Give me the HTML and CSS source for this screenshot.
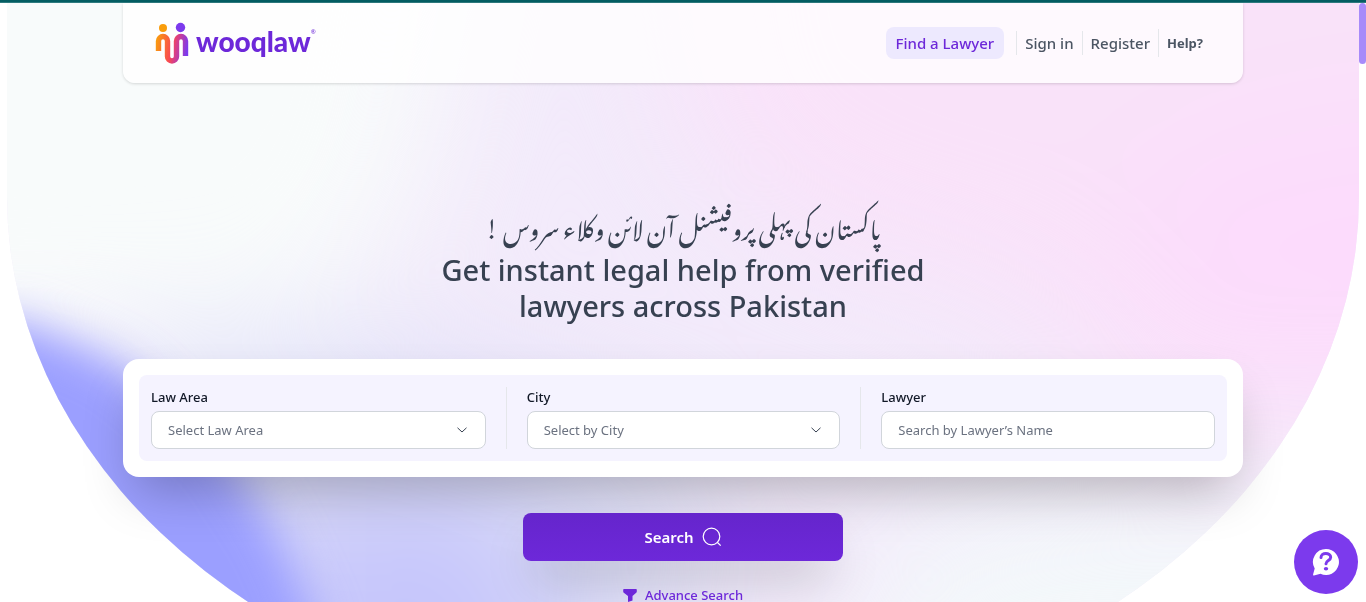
FILE: index.html
```html
<!DOCTYPE html>
<html lang="en">
<head>
<meta charset="utf-8">
<meta name="viewport" content="width=device-width, initial-scale=1">
<title>Wooqlaw</title>
<link rel="stylesheet" href="styles.css">
</head>
<body>
<div class="top-strip"></div>
<div class="scroll-thumb"></div>
<div class="hero">
  <div class="hero-bg">
    <svg class="hero-art" viewBox="0 0 1352 723" preserveAspectRatio="none" aria-hidden="true">
      <defs>
        <filter id="soft" x="-60%" y="-60%" width="220%" height="220%" color-interpolation-filters="sRGB"><feGaussianBlur stdDeviation="65"/></filter>
        <filter id="edge" x="-60%" y="-60%" width="220%" height="220%" color-interpolation-filters="sRGB"><feGaussianBlur stdDeviation="22"/></filter>
      </defs>
      <rect width="1352" height="723" fill="#f3ebfb"/>
      <g filter="url(#soft)">
        <path d="M-300-300H500L420 180 330 320-300 380Z" fill="#f8fbfb"/>
        <path d="M640-200H1600V450H1150L1000 300 800 240 680 140Z" fill="#f9e2f9"/>
        <path d="M1600 90L1260 130 1100 200 1180 340 1600 430Z" fill="#fcdbfc"/>
        <path d="M100 350L380 340 540 390 700 440 660 900H200Z" fill="#dfe0f8"/>
        <path d="M1600 540L1100 490 900 520 740 900H1600Z" fill="#f3f8fa"/>
        <path d="M260 500L500 480 600 800H260Z" fill="#c5c5fb"/>
      </g>
      <path d="M-120 305L20 320 110 360 215 445 270 530 310 620 335 800H-120Z" fill="#9b9fff" filter="url(#edge)"/>
    </svg>
  </div>
  <div class="container">
    <header class="site-header">
      <a class="logo" href="#" aria-label="wooqlaw home">
        <svg class="logo-mark" viewBox="0 0 34 42" aria-hidden="true">
          <defs>
            <linearGradient id="mark" gradientUnits="userSpaceOnUse" x1="1" y1="18" x2="33" y2="24">
              <stop offset="0" stop-color="#f99d0c"/><stop offset=".5" stop-color="#f94a50"/><stop offset=".65" stop-color="#d93f86"/><stop offset="1" stop-color="#7c3aed"/>
            </linearGradient>
          </defs>
          <circle cx="8" cy="6" r="4" fill="#f99d0c"/>
          <circle cx="25.500" cy="5.500" r="4.700" fill="#7c3aed"/>
          <path d="M3.500 29V19a4.500 4.500 0 0 1 9 0V34.500a4.500 4.500 0 0 0 9 0V19a4.500 4.500 0 0 1 9 0V34" fill="none" stroke="url(#mark)" stroke-width="5.400"/>
        </svg>
        <span class="logo-word">wooqlaw</span><sup class="logo-reg">®</sup>
      </a>
      <nav class="nav">
        <a class="nav-cta" href="#">Find a Lawyer</a>
        <a class="nav-link" href="#">Sign in</a>
        <a class="nav-link" href="#">Register</a>
        <a class="nav-link nav-help" href="#">Help?</a>
      </nav>
    </header>
    <main class="main">
      <h2 class="urdu" lang="ur" dir="rtl">پاکستان کی پہلی پروفیشنل آن لائن وکلاء سروس !</h2>
      <h1 class="title">Get instant legal help from verified lawyers across Pakistan</h1>
      <form class="search">
        <div class="search-card">
          <div class="fields">
            <div class="field">
              <label for="area">Law Area</label>
              <div class="control">
                <select id="area"><option>Select Law Area</option></select>
                <svg class="chevron" viewBox="0 0 10 6" aria-hidden="true"><path d="M.5.8L5 5 9.500.8" fill="none" stroke="#374151"/></svg>
              </div>
            </div>
            <div class="field">
              <label for="city">City</label>
              <div class="control">
                <select id="city"><option>Select by City</option></select>
                <svg class="chevron" viewBox="0 0 10 6" aria-hidden="true"><path d="M.5.8L5 5 9.500.8" fill="none" stroke="#374151"/></svg>
              </div>
            </div>
            <div class="field">
              <label for="lawyer">Lawyer</label>
              <div class="control"><input id="lawyer" type="text" placeholder="Search by Lawyer’s Name"></div>
            </div>
          </div>
        </div>
        <button class="submit" type="submit">Search
          <svg class="submit-icon" viewBox="0 0 20 20" fill="none" stroke="currentColor" stroke-width="1.200" aria-hidden="true"><circle cx="9.500" cy="9.500" r="8.300"/><path d="M15.500 15.500L18.700 18.700"/></svg>
        </button>
        <a class="advance" href="#">
          <svg class="funnel" viewBox="0 0 14 14" fill="currentColor" aria-hidden="true"><path d="M1 1H13a.8.8 0 0 1 .8.800V3.500a1.500 1.500 0 0 1-.6 1.200L9.500 8V12.500L5 14V8L.8 4.700A1.500 1.500 0 0 1 .2 3.500V1.800A.8.8 0 0 1 1 1Z"/></svg>
          Advance Search
        </a>
      </form>
    </main>
  </div>
</div>
<button class="help-fab" aria-label="Help">
  <svg class="help-icon" viewBox="0 0 28 28" aria-hidden="true">
    <path d="M14 1a13 13 0 1 1-5.500 24.800L2 27.500Q.8 27.500 1.200 26L2.700 20.500A13 13 0 0 1 14 1Z" fill="#fff"/>
    <path d="M9 9.500C9 3.800 18.700 4.300 18.700 9.300C18.700 12.600 14 12.500 14 15.800" fill="none" stroke="#7c3aed" stroke-width="3" stroke-linecap="round"/>
    <ellipse cx="14" cy="20.700" rx="2.200" ry="1.800" fill="#7c3aed"/>
  </svg>
</button>
</body>
</html>
```
FILE: styles.css
```css
* { box-sizing: border-box; }
body {
  margin: 0;
  height: 100vh;
  overflow: hidden;
  background: #fff;
  color: #374151;
  font-family: "Segoe UI", "Noto Sans", "Open Sans", sans-serif;
}
a { text-decoration: none; color: inherit; }
.top-strip { height: 3px; background: #045d62; border-bottom: 1px solid #2e7b7f; }
.scroll-thumb {
  position: fixed;
  top: 3px;
  right: 0;
  width: 7px;
  height: 61px;
  border-radius: 4px;
  background: #a78bfa;
}
.hero { position: relative; padding: 0 7px; }
.hero-bg {
  position: absolute;
  inset: 0 7px auto;
  height: 723px;
  overflow: hidden;
  border-radius: 0 0 50% 50% / 0 0 529px 529px;
}
.hero-art { display: block; width: 100%; height: 100%; }
.container { position: relative; max-width: 1120px; margin: 0 auto; }
.site-header {
  display: flex;
  align-items: center;
  justify-content: space-between;
  height: 80px;
  padding: 0 32px;
  border-radius: 0 0 12px 12px;
  background: rgba(255, 255, 255, .8);
  box-shadow: 0 1px 3px rgba(0, 0, 0, .15);
}
.logo { display: flex; align-items: center; }
.logo-mark { width: 34px; height: 42px; }
.logo-word {
  margin: 0 0 4px 7px;
  font: 900 28px/36px Lato, sans-serif;
  color: #6d28d9;
}
.logo-reg { align-self: flex-start; font-size: 6px; line-height: 20px; color: #6d28d9; }
.nav { display: flex; align-items: center; font-size: 15px; line-height: 24px; font-weight: 500; color: #4b5563; }
.nav-cta {
  margin-right: 12px;
  padding: 4px 10px;
  border-radius: 8px;
  background: #ede9fe;
  color: #6d28d9;
}
.nav-link { padding: 0 8px; border-left: 1px solid #e5e7eb; }
.nav-help { font-size: 13px; line-height: 28px; font-weight: 700; }
.main { padding-top: 113px; text-align: center; }
.urdu { margin: 0; font: 400 24px/56px "Noto Nastaliq Urdu", "DejaVu Sans", sans-serif; white-space: nowrap; }
.title { max-width: 512px; margin: 0 auto 35px; font-size: 29px; line-height: 36px; font-weight: 500; }
.search { display: flex; flex-direction: column; align-items: center; }
.search-card {
  align-self: stretch;
  padding: 16px;
  border-radius: 16px;
  background: #fff;
  box-shadow: 0 25px 50px -12px rgba(0, 0, 0, .25);
}
.fields {
  display: grid;
  grid-template-columns: repeat(3, 1fr);
  padding: 12px;
  border-radius: 8px;
  background: #f5f3ff;
  text-align: left;
}
.field { padding: 0 20px; border-left: 1px solid #e5e7eb; }
.field:first-child { padding-left: 0; border-left: 0; }
.field:last-child { padding-right: 0; }
.field label { display: block; margin-bottom: 4px; font-size: 13px; line-height: 20px; font-weight: 500; color: #111827; }
.control { position: relative; }
.control select, .control input {
  display: block;
  width: 100%;
  height: 38px;
  padding: 0 16px;
  appearance: none;
  border: 1px solid #d1d5db;
  border-radius: 8px;
  background: #fff;
  color: #6b7280;
  font: 400 13px/20px "Segoe UI", "Noto Sans", "Open Sans", sans-serif;
}
.control input::placeholder { color: #6b7280; }
.chevron { position: absolute; right: 19px; top: 16px; width: 10px; height: 6px; pointer-events: none; }
.submit {
  display: flex;
  align-items: center;
  justify-content: center;
  gap: 8px;
  width: 320px;
  height: 48px;
  margin-top: 36px;
  border: 0;
  border-radius: 8px;
  background: linear-gradient(#6525cc, #6d28d9);
  box-shadow: 0 25px 50px -12px rgba(0, 0, 0, .25);
  color: #fff;
  font: 600 15px/24px "Segoe UI", "Noto Sans", "Open Sans", sans-serif;
}
.submit-icon { width: 20px; height: 20px; }
.advance {
  display: flex;
  align-items: center;
  gap: 8px;
  margin-top: 24px;
  font-size: 13px;
  line-height: 20px;
  font-weight: 500;
  color: #6d28d9;
}
.funnel { width: 14px; height: 14px; }
.help-fab {
  position: fixed;
  right: 8px;
  bottom: 8px;
  display: grid;
  place-items: center;
  width: 64px;
  height: 64px;
  padding: 0;
  border: 0;
  border-radius: 50%;
  background: #7c3aed;
}
.help-icon { width: 28px; height: 28px; }
```
